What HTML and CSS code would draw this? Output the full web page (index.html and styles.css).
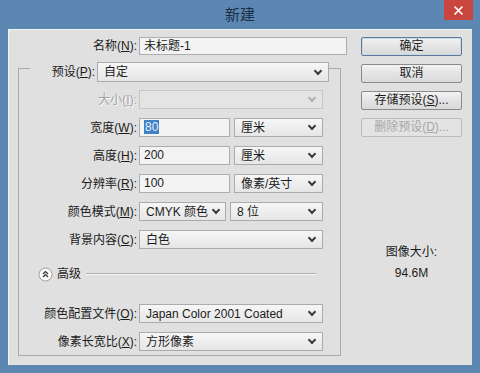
FILE: index.html
```html
<!DOCTYPE html>
<html lang="zh-CN">
<head>
<meta charset="utf-8">
<title>新建</title>
<link rel="stylesheet" href="styles.css">
</head>
<body>
<div class="window">
  <div class="titlebar">
    <span class="spacer"></span>
    <span class="title">新建</span>
    <span class="close"><svg width="11" height="11" viewBox="0 0 11 11"><path d="M1.5 1.5 L9.5 9.5 M9.5 1.5 L1.5 9.5" stroke="#fff" stroke-width="1.7" fill="none"/></svg></span>
  </div>
  <div class="client">
    <div class="main">
      <div class="name-row">
        <span class="lbl">名称(<u>N</u>):</span>
        <div class="input name-input">未标题-1</div>
      </div>
      <div class="group-head">
        <span class="tick tick-l"></span>
        <span class="head-lbl">预设(<u>P</u>):</span>
        <div class="select preset">自定</div>
        <span class="tick tick-r"></span>
      </div>
      <div class="group">
        <div class="grid">
          <span class="lbl disabled">大小(<u>I</u>):</span>
          <div class="select off"></div>

          <span class="lbl">宽度(<u>W</u>):</span>
          <div class="pair">
            <div class="input num"><span class="sel-text">80</span></div>
            <div class="select unit">厘米</div>
          </div>

          <span class="lbl">高度(<u>H</u>):</span>
          <div class="pair">
            <div class="input num">200</div>
            <div class="select unit">厘米</div>
          </div>

          <span class="lbl">分辨率(<u>R</u>):</span>
          <div class="pair">
            <div class="input num">100</div>
            <div class="select unit">像素/英寸</div>
          </div>

          <span class="lbl">颜色模式(<u>M</u>):</span>
          <div class="pair">
            <div class="select mode">CMYK 颜色</div>
            <div class="select bits">8 位</div>
          </div>

          <span class="lbl">背景内容(<u>C</u>):</span>
          <div class="select">白色</div>
        </div>

        <div class="adv">
          <svg class="adv-icon" width="15" height="15" viewBox="0 0 15 15"><circle cx="7.5" cy="7.5" r="6.5" fill="#fbfbfb" stroke="#a0a0a0"/><path d="M5 7 L7.5 4.6 L10 7 M5 10 L7.5 7.6 L10 10" stroke="#333" stroke-width="1.3" fill="none"/></svg>
          <span class="adv-text">高级</span>
          <span class="sep"></span>
        </div>

        <div class="grid grid2">
          <span class="lbl">颜色配置文件(<u>O</u>):</span>
          <div class="select">Japan Color 2001 Coated</div>

          <span class="lbl">像素长宽比(<u>X</u>):</span>
          <div class="select">方形像素</div>
        </div>
      </div>
    </div>
    <div class="side">
      <div class="btn default">确定</div>
      <div class="btn">取消</div>
      <div class="btn">存储预设(<u>S</u>)...</div>
      <div class="btn dim">删除预设(<u>D</u>)...</div>
      <div class="info">
        <div class="info-lbl">图像大小:</div>
        <div class="info-val">94.6M</div>
      </div>
    </div>
  </div>
</div>
</body>
</html>
```
FILE: styles.css
```css
* { box-sizing: border-box; }
body {
  margin: 0;
  background: #5b87b2;
  font-family: "Liberation Sans", "Noto Sans CJK SC", sans-serif;
  font-size: 12px;
  color: #1b1b1b;
}
u { text-decoration: underline; text-underline-offset: 1px; }
.window {
  width: 480px;
  height: 373px;
  background: #5b87b2;
  display: flex;
  flex-direction: column;
}
.titlebar {
  height: 29px;
  display: grid;
  grid-template-columns: 1fr auto 1fr;
}
.title {
  align-self: center;
  font-family: "Noto Sans CJK SC", sans-serif;
  font-size: 15px;
  line-height: 18px;
  color: #1d2f46;
  margin-top: -1px;
}
.close {
  justify-self: end;
  align-self: start;
  width: 29px;
  height: 20px;
  margin-right: 7px;
  background: #c8463d;
  display: flex;
  align-items: center;
  justify-content: center;
}
.client {
  margin: 0 8px;
  height: 336px;
  background: #e0e0e0;
  display: flex;
  box-shadow: inset 1px 1px 0 #f2f2f2;
}
.main { width: 339px; padding-top: 8px; }
.lbl { text-align: right; line-height: 16px; white-space: nowrap; }
.lbl.disabled { color: #a4a4a4; text-shadow: 1px 1px 0 #fafafa; }
.name-row { display: flex; align-items: center; height: 18px; }
.name-row .lbl { width: 129px; }
.input {
  height: 19px;
  border: 1px solid #abadb3;
  background: #f3f3f3;
  padding-left: 4px;
  line-height: 17px;
  white-space: nowrap;
}
.name-input { width: 208px; height: 18px; margin-left: 2px; line-height: 16px; }
.select {
  height: 19px;
  border: 1px solid #ababab;
  background: linear-gradient(#f6f6f6, #e6e6e6);
  padding: 0 7px 0 6px;
  display: flex;
  align-items: center;
  white-space: nowrap;
  line-height: 16px;
}
.select::after {
  content: "";
  flex: none;
  width: 4px;
  height: 4px;
  margin-left: auto;
  border-right: 2px solid #3c3c3c;
  border-bottom: 2px solid #3c3c3c;
  transform: rotate(45deg);
  margin-top: -3px;
}
.select.off { background: #e4e4e4; border-color: #c6c6c6; }
.select.off::after { border-color: #b0b0b0; }
.group-head {
  display: flex;
  margin-top: 7px;
  margin-left: 10px;
  width: 323px;
  height: 20px;
}
.tick {
  width: 12px;
  height: 14px;
  margin-top: 6px;
  border-top: 1px solid #a9a9a9;
  flex: none;
}
.tick-l { border-left: 1px solid #a9a9a9; }
.tick-r { border-right: 1px solid #a9a9a9; }
.head-lbl { width: 65px; text-align: right; line-height: 20px; margin-right: 2px; }
.preset { width: 232px; height: 20px; }
.group {
  margin-left: 10px;
  width: 323px;
  border: 1px solid #a9a9a9;
  border-top: none;
  padding: 8px 0 4px;
}
.grid {
  display: grid;
  grid-template-columns: 118px 184px;
  column-gap: 2px;
  row-gap: 9px;
  grid-auto-rows: 19px;
  align-items: center;
}
.pair { display: flex; gap: 4px; }
.num { width: 91px; }
.unit { width: 89px; }
.mode { width: 87px; padding-right: 6px; }
.bits { width: 93px; }
.sel-text { background: #3f82c6; color: #e8f0fa; padding: 0 1px; }
.adv {
  display: flex;
  align-items: center;
  height: 20px;
  margin-top: 15px;
  padding-left: 19px;
}
.adv-icon { flex: none; }
.adv-text { margin-left: 4px; line-height: 16px; }
.sep {
  margin-left: 5px;
  width: 230px;
  height: 2px;
  border-top: 1px solid #b0b0b0;
  border-bottom: 1px solid #f7f7f7;
}
.grid2 { margin-top: 20px; }
.side { margin-left: 14px; width: 101px; padding-top: 8px; }
.btn {
  height: 19px;
  margin-bottom: 8px;
  border: 1px solid #8a8a8a;
  border-radius: 2px;
  background: linear-gradient(#f3f3f3, #e4e4e4 50%, #d9d9d9);
  text-align: center;
  line-height: 17px;
  white-space: nowrap;
}
.btn.default { border-color: #5e7a96; box-shadow: inset 0 0 0 1px #c9d8e6; }
.btn.dim { color: #a6a6a6; border-color: #bcbcbc; background: #e3e3e3; }
.info { margin-top: 107px; text-align: center; }
.info-lbl { line-height: 16px; }
.info-val { line-height: 16px; margin-top: 5px; }
```
